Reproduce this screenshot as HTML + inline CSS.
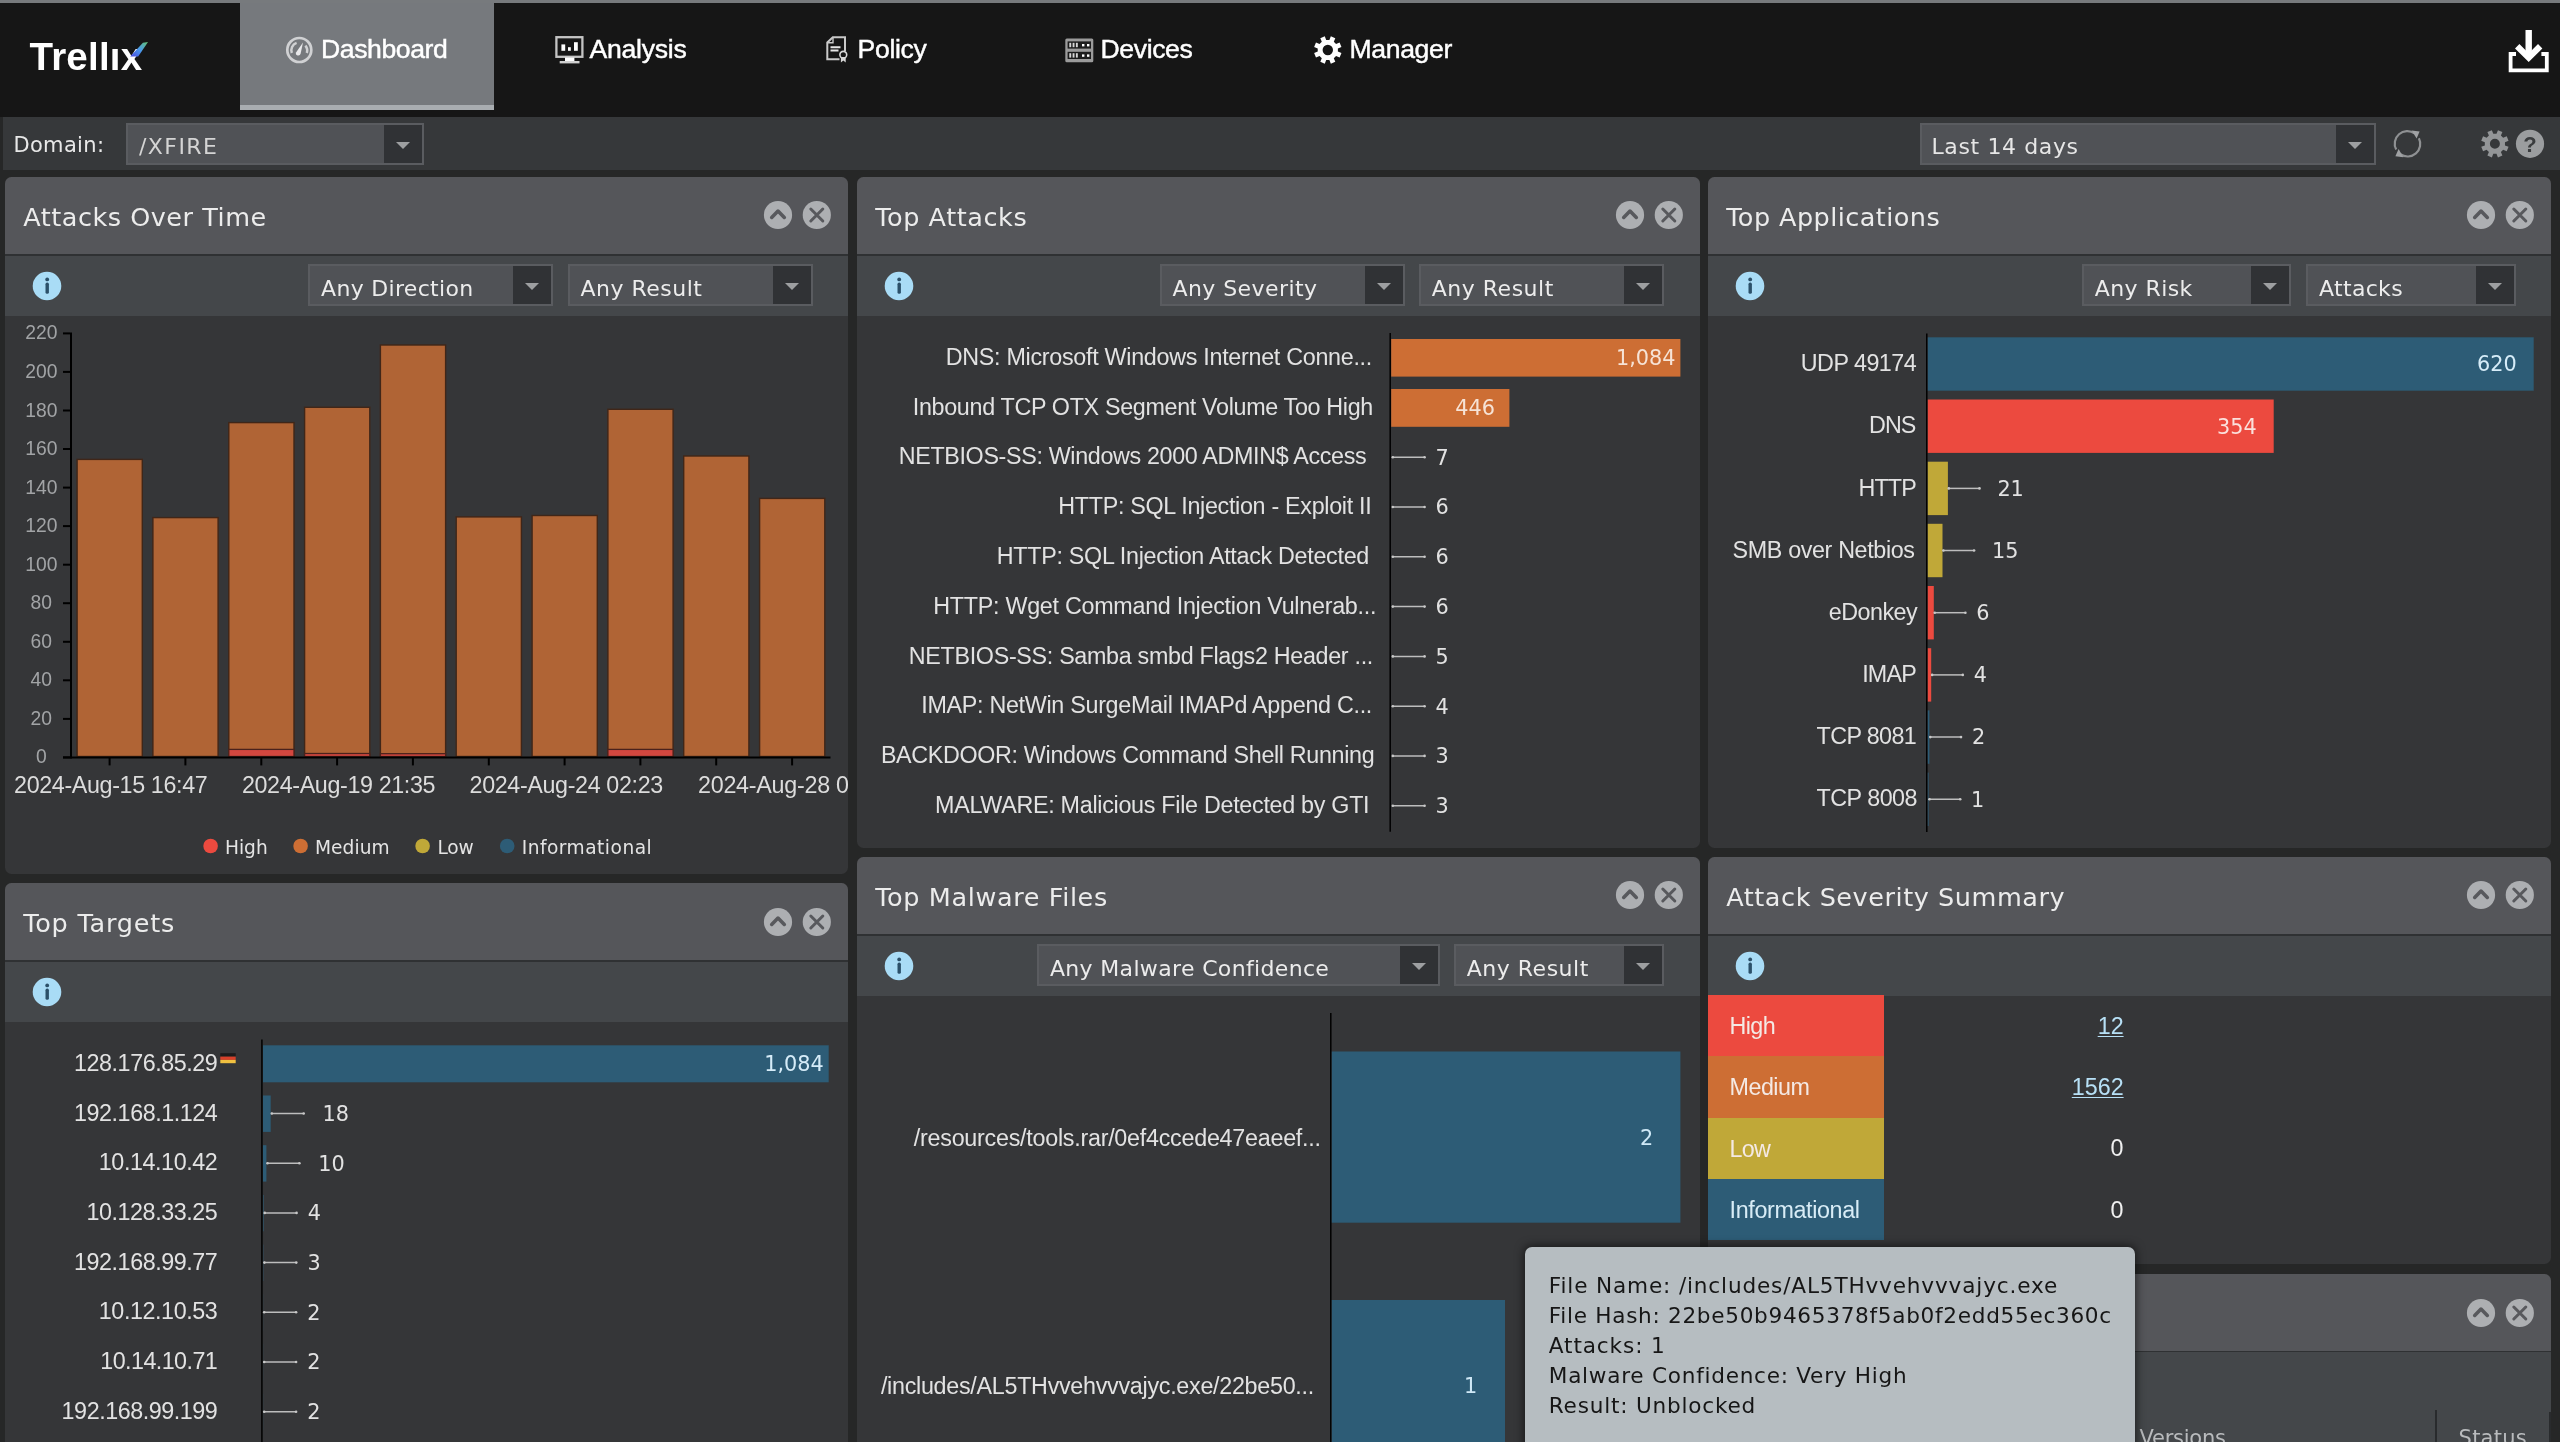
<!DOCTYPE html>
<html lang="en"><head><meta charset="utf-8"><title>Trellix Dashboard</title>
<style>
html,body{margin:0;padding:0;background:#262727;overflow:hidden;}
body{width:2560px;height:1442px;overflow:hidden;position:relative;font-family:"DejaVu Sans",Verdana,sans-serif;color:#e6e6e6;}
div,span,svg{position:absolute;box-sizing:border-box;}
.t{white-space:pre;}
#nav,#toolbar,.panel,#tip{will-change:transform;}
.l{font-family:"Liberation Sans",Arial,Helvetica,sans-serif;}
.d{font-family:"DejaVu Sans",Verdana,sans-serif;}
.b{font-weight:bold;}
#strip{left:0;top:0;width:2560px;height:3px;background:#777a7d;}
#nav{left:0;top:3px;width:2560px;height:114px;background:#161616;}
#tab{left:240px;top:0;width:254px;height:107px;background:#76797d;border-bottom:5px solid #a9adb1;}
.nt{color:#fff;-webkit-text-stroke:0.45px #fff;}
#toolbar{left:3px;top:117px;width:2557px;height:53px;background:#36383a;}
.panel{background:#353638;border-radius:6.5px;overflow:hidden;}
.ph{left:0;top:0;width:100%;height:77px;background:#55565a;}
.pl{left:0;top:76.5px;width:100%;height:2px;background:#2f3133;}
.ps{left:0;top:78px;width:100%;height:60px;background:#44474a;}
.combo{height:42px;background:#505256;border:2px solid #5a5c60;}
.combo i{position:absolute;right:0;top:0;width:38px;height:38px;background:#303235;}
.combo i:after{content:"";position:absolute;left:12px;top:16.5px;border-left:7.5px solid transparent;border-right:7.5px solid transparent;border-top:7px solid #9d9fa1;}
.ct{color:#ececec;}
</style></head>
<body>
<div id="strip"></div>
<div id="nav">
<div id="tab"></div>
<span class="t l b " style="left:29.6px;top:32px;font-size:38.5px;line-height:43px;letter-spacing:0.202px;color:#fff;">Trellix</span>
<svg style="left:125px;top:34px" width="30" height="30" viewBox="125 37 30 30"><defs><linearGradient id="lg" x1="0" y1="1" x2="1" y2="0"><stop offset="0" stop-color="#4a46e0"/><stop offset="0.5" stop-color="#4a9aec"/><stop offset="1" stop-color="#63c36f"/></linearGradient></defs><path d="M130.2 56.6 L142.9 42.8 L148 41.9 L138.2 56.6 Z" fill="url(#lg)"/></svg>
<span class="t l nt" style="left:321.0px;top:31px;font-size:26.6px;line-height:30px;letter-spacing:-0.416px;">Dashboard</span>
<span class="t l nt" style="left:589.5px;top:31px;font-size:26.6px;line-height:30px;letter-spacing:-0.250px;">Analysis</span>
<span class="t l nt" style="left:857.6px;top:31px;font-size:26.6px;line-height:30px;letter-spacing:-0.331px;">Policy</span>
<span class="t l nt" style="left:1100.5px;top:31px;font-size:26.6px;line-height:30px;letter-spacing:-0.385px;">Devices</span>
<span class="t l nt" style="left:1349.5px;top:31px;font-size:26.6px;line-height:30px;letter-spacing:-0.364px;">Manager</span>
<svg style="left:0;top:0" width="2560" height="114" viewBox="0 3 2560 114">
<rect x="110.5" y="40.5" width="9" height="7.2" fill="#161616"/>
<g fill="none" stroke="#d0d1d3" stroke-width="2.7"><circle cx="299.3" cy="50" r="12"/><path d="M291.8 53 A7.8 7.8 0 0 1 296.6 42.9" stroke-width="2.5"/><path d="M305.4 45.6 A7.8 7.8 0 0 1 306.8 53" stroke-width="2.5"/></g><path d="M303 42.4 L300.6 53.8 A2.4 2.4 0 0 1 296 52.4 Z" fill="#e8e8ea"/>
<g><rect x="556.4" y="37.2" width="26" height="19.6" fill="none" stroke="#c4c4c4" stroke-width="2.3"/><rect x="565" y="57.5" width="9.4" height="3.6" fill="#fff"/><rect x="559.7" y="61" width="19.8" height="2.4" fill="#d0d0d0"/><rect x="561.4" y="44.4" width="3.8" height="6.4" fill="#fff"/><rect x="568" y="47.2" width="2.8" height="3.6" fill="#fff"/><rect x="574" y="42.2" width="3.8" height="8.6" fill="#fff"/></g>
<g fill="none" stroke="#c9c9c9" stroke-width="2"><path d="M839.5 59.3 L827.3 59.3 L827.3 42.5 L832.8 37.2 L845 37.2 L845 51"/><path d="M827.5 42.8 L833 42.8 L833 37.4" stroke-width="1.4"/><path d="M830.5 47.2 L840.5 47.2 M830.5 50.6 L838.5 50.6" stroke="#e6e6e6"/></g><circle cx="843.3" cy="54.8" r="3.4" fill="none" stroke="#d8d8d8" stroke-width="1.6"/><path d="M840.9 57 L840.9 62.4 L843.3 60.6 L845.7 62.4 L845.7 57 Z" fill="#d8d8d8"/>
<g><rect x="1065.3" y="38.4" width="28" height="23.8" rx="1.5" fill="#9b9b9b"/><rect x="1067.6" y="41.4" width="23.4" height="7.2" fill="#1c1c1c"/><rect x="1067.6" y="51.8" width="23.4" height="7.2" fill="#1c1c1c"/>
<rect x="1069.3" y="42.8" width="1.9" height="4.4" fill="#d6d6d6"/>
<rect x="1072.6" y="42.8" width="1.9" height="4.4" fill="#d6d6d6"/>
<rect x="1075.9" y="42.8" width="1.9" height="4.4" fill="#d6d6d6"/>
<rect x="1082" y="44" width="2.4" height="2.4" fill="#fff"/>
<rect x="1087" y="44" width="2.4" height="2.4" fill="#fff"/>
<rect x="1069.3" y="53.199999999999996" width="1.9" height="4.4" fill="#d6d6d6"/>
<rect x="1072.6" y="53.199999999999996" width="1.9" height="4.4" fill="#d6d6d6"/>
<rect x="1075.9" y="53.199999999999996" width="1.9" height="4.4" fill="#d6d6d6"/>
<rect x="1082" y="54.4" width="2.4" height="2.4" fill="#fff"/>
<rect x="1087" y="54.4" width="2.4" height="2.4" fill="#fff"/>
</g>
<path d="M1341.46 53.05 L1339.62 57.50 L1336.05 56.00 L1333.80 58.25 L1335.30 61.82 L1330.85 63.66 L1329.40 60.07 L1326.20 60.07 L1324.75 63.66 L1320.30 61.82 L1321.80 58.25 L1319.55 56.00 L1315.98 57.50 L1314.14 53.05 L1317.73 51.60 L1317.73 48.40 L1314.14 46.95 L1315.98 42.50 L1319.55 44.00 L1321.80 41.75 L1320.30 38.18 L1324.75 36.34 L1326.20 39.93 L1329.40 39.93 L1330.85 36.34 L1335.30 38.18 L1333.80 41.75 L1336.05 44.00 L1339.62 42.50 L1341.46 46.95 L1337.87 48.40 L1337.87 51.60 Z M1333.00 50.00 A5.2 5.2 0 1 0 1322.60 50.00 A5.2 5.2 0 1 0 1333.00 50.00 Z" fill="#fff" fill-rule="evenodd"/>
<g fill="none" stroke="#fff"><path d="M2516 54 L2510.6 54 L2510.6 70.3 L2546.8 70.3 L2546.8 54 L2541.4 54" stroke-width="3.8"/><path d="M2528.7 30 L2528.7 56" stroke-width="6.4"/><path d="M2517.2 46.2 L2528.7 57.6 L2540.2 46.2" stroke-width="6.2"/></g>
</svg>
</div>
<div id="toolbar">
<span class="t d " style="left:10.4px;top:16px;font-size:21px;line-height:24px;letter-spacing:0.339px;color:#e8e8e8;">Domain:</span>
<div class="combo" style="left:123px;top:6px;width:298px;height:42px"><span class="t d " style="left:11.0px;top:9px;font-size:22px;line-height:25px;letter-spacing:1.437px;color:#d4d4d4;">/XFIRE</span><i></i></div>
<div class="combo" style="left:1917px;top:6px;width:456px;height:42px"><span class="t d " style="left:9.5px;top:9px;font-size:22px;line-height:25px;letter-spacing:0.615px;color:#e6e6e6;">Last 14 days</span><i></i></div>
<svg style="left:0;top:0" width="2557" height="53" viewBox="3 117 2557 53">
<g fill="none" stroke="#8f9193" stroke-width="2.2"><path d="M2396.2 149.6 A12.6 12.6 0 0 1 2414.6 133.4"/><path d="M2418.9 138.2 A12.6 12.6 0 0 1 2400.4 154.2"/></g><path d="M2411.6 130.6 L2419.6 131.4 L2416.6 138.6 Z" fill="#a0a2a4"/><path d="M2403.4 157.2 L2395.4 156.2 L2398.6 149 Z" fill="#a0a2a4"/>
<path d="M2508.56 146.85 L2506.72 151.30 L2503.15 149.80 L2500.90 152.05 L2502.40 155.62 L2497.95 157.46 L2496.50 153.87 L2493.30 153.87 L2491.85 157.46 L2487.40 155.62 L2488.90 152.05 L2486.65 149.80 L2483.08 151.30 L2481.24 146.85 L2484.83 145.40 L2484.83 142.20 L2481.24 140.75 L2483.08 136.30 L2486.65 137.80 L2488.90 135.55 L2487.40 131.98 L2491.85 130.14 L2493.30 133.73 L2496.50 133.73 L2497.95 130.14 L2502.40 131.98 L2500.90 135.55 L2503.15 137.80 L2506.72 136.30 L2508.56 140.75 L2504.97 142.20 L2504.97 145.40 Z M2499.90 143.80 A5 5 0 1 0 2489.90 143.80 A5 5 0 1 0 2499.90 143.80 Z" fill="#939597" fill-rule="evenodd"/>
<circle cx="2530" cy="143.8" r="14.1" fill="#9b9d9f"/>
<text x="2530.0" y="151.6" font-family="Liberation Sans, Arial, sans-serif" font-size="22" fill="#3a3c3e" text-anchor="middle" font-weight="bold">?</text>
</svg>
</div>
<div class="panel" style="left:5px;top:177px;width:843px;height:697px">
<div class="ph" style="height:77.0px">
<span class="t d " style="left:18.2px;top:25px;font-size:25.5px;line-height:30px;letter-spacing:0.522px;color:#ececec;">Attacks Over Time</span>
</div><div class="pl" style="top:76.5px"></div><div class="ps" style="top:78.5px;height:60.0px"></div>
<svg style="left:757.8px;top:23.2px" width="68.8" height="30" viewBox="762.8 200.2 68.8 30"><circle cx="777.8" cy="215.2" r="14.1" fill="#adafb2"/><path d="M771.5 217.6 L777.8 211.3 L784.1 217.6" fill="none" stroke="#58595d" stroke-width="3.6" stroke-linecap="round" stroke-linejoin="round"/><circle cx="816.6" cy="215.2" r="14.1" fill="#adafb2"/><path d="M810.6 209.2 L822.6 221.2 M822.6 209.2 L810.6 221.2" fill="none" stroke="#58595d" stroke-width="3" stroke-linecap="round"/></svg>
<svg style="left:27.2px;top:93.8px" width="30" height="30" viewBox="-15 -15 30 30"><circle r="14.3" fill="#a9dcf6"/><circle cx="0.2" cy="-6.6" r="1.9" fill="#2b5069"/><rect x="-1.5" y="-3.4" width="3.4" height="11.2" rx="1.6" fill="#2b5069"/></svg>
<div class="combo" style="left:303.3px;top:87.3px;width:244.7px;height:42px"><span class="t d ct" style="left:10.8px;top:10px;font-size:22px;line-height:25px;letter-spacing:0.301px;">Any Direction</span><i></i></div>
<div class="combo" style="left:562.7px;top:87.3px;width:245.2px;height:42px"><span class="t d ct" style="left:10.8px;top:10px;font-size:22px;line-height:25px;letter-spacing:0.502px;">Any Result</span><i></i></div>
<svg style="left:0;top:138px" width="843" height="559" viewBox="5 315 843 559">
<rect x="77.1" y="459.4" width="65.2" height="297.1" fill="#b06435" stroke="#402618" stroke-width="1.4"/>
<rect x="152.9" y="517.6" width="65.2" height="238.9" fill="#b06435" stroke="#402618" stroke-width="1.4"/>
<rect x="228.8" y="422.6" width="65.2" height="333.9" fill="#b06435" stroke="#402618" stroke-width="1.4"/>
<rect x="228.8" y="749.4" width="65.2" height="7.1" fill="#d2473f" stroke="#4a221c" stroke-width="1.3"/>
<rect x="304.6" y="407.3" width="65.2" height="349.2" fill="#b06435" stroke="#402618" stroke-width="1.4"/>
<rect x="304.6" y="753.5" width="65.2" height="3.0" fill="#d2473f" stroke="#4a221c" stroke-width="1.3"/>
<rect x="380.4" y="345.0" width="65.2" height="411.5" fill="#b06435" stroke="#402618" stroke-width="1.4"/>
<rect x="380.4" y="753.7" width="65.2" height="2.8" fill="#d2473f" stroke="#4a221c" stroke-width="1.3"/>
<rect x="456.2" y="516.9" width="65.2" height="239.6" fill="#b06435" stroke="#402618" stroke-width="1.4"/>
<rect x="532.1" y="515.5" width="65.2" height="241.0" fill="#b06435" stroke="#402618" stroke-width="1.4"/>
<rect x="607.9" y="409.3" width="65.2" height="347.2" fill="#b06435" stroke="#402618" stroke-width="1.4"/>
<rect x="607.9" y="749.4" width="65.2" height="7.1" fill="#d2473f" stroke="#4a221c" stroke-width="1.3"/>
<rect x="683.7" y="456.0" width="65.2" height="300.5" fill="#b06435" stroke="#402618" stroke-width="1.4"/>
<rect x="759.6" y="498.4" width="65.2" height="258.1" fill="#b06435" stroke="#402618" stroke-width="1.4"/>
<path d="M71 332.4 L71 758.4" stroke="#000" stroke-width="2" fill="none"/>
<path d="M63 757.4 L830.5 757.4" stroke="#000" stroke-width="2" fill="none"/>
<path d="M63 757.4 L70 757.4" stroke="#000" stroke-width="2"/>
<text x="41.3" y="763.4" font-family="Liberation Sans, Arial, sans-serif" font-size="19.3" fill="#a2a4a6" text-anchor="middle">0</text>
<path d="M63 718.9 L70 718.9" stroke="#000" stroke-width="2"/>
<text x="41.3" y="724.9" font-family="Liberation Sans, Arial, sans-serif" font-size="19.3" fill="#a2a4a6" text-anchor="middle">20</text>
<path d="M63 680.3 L70 680.3" stroke="#000" stroke-width="2"/>
<text x="41.3" y="686.3" font-family="Liberation Sans, Arial, sans-serif" font-size="19.3" fill="#a2a4a6" text-anchor="middle">40</text>
<path d="M63 641.8 L70 641.8" stroke="#000" stroke-width="2"/>
<text x="41.3" y="647.8" font-family="Liberation Sans, Arial, sans-serif" font-size="19.3" fill="#a2a4a6" text-anchor="middle">60</text>
<path d="M63 603.2 L70 603.2" stroke="#000" stroke-width="2"/>
<text x="41.3" y="609.2" font-family="Liberation Sans, Arial, sans-serif" font-size="19.3" fill="#a2a4a6" text-anchor="middle">80</text>
<path d="M63 564.7 L70 564.7" stroke="#000" stroke-width="2"/>
<text x="41.3" y="570.7" font-family="Liberation Sans, Arial, sans-serif" font-size="19.3" fill="#a2a4a6" text-anchor="middle">100</text>
<path d="M63 526.1 L70 526.1" stroke="#000" stroke-width="2"/>
<text x="41.3" y="532.1" font-family="Liberation Sans, Arial, sans-serif" font-size="19.3" fill="#a2a4a6" text-anchor="middle">120</text>
<path d="M63 487.6 L70 487.6" stroke="#000" stroke-width="2"/>
<text x="41.3" y="493.6" font-family="Liberation Sans, Arial, sans-serif" font-size="19.3" fill="#a2a4a6" text-anchor="middle">140</text>
<path d="M63 449.0 L70 449.0" stroke="#000" stroke-width="2"/>
<text x="41.3" y="455.0" font-family="Liberation Sans, Arial, sans-serif" font-size="19.3" fill="#a2a4a6" text-anchor="middle">160</text>
<path d="M63 410.5 L70 410.5" stroke="#000" stroke-width="2"/>
<text x="41.3" y="416.5" font-family="Liberation Sans, Arial, sans-serif" font-size="19.3" fill="#a2a4a6" text-anchor="middle">180</text>
<path d="M63 371.9 L70 371.9" stroke="#000" stroke-width="2"/>
<text x="41.3" y="377.9" font-family="Liberation Sans, Arial, sans-serif" font-size="19.3" fill="#a2a4a6" text-anchor="middle">200</text>
<path d="M63 333.4 L70 333.4" stroke="#000" stroke-width="2"/>
<text x="41.3" y="339.4" font-family="Liberation Sans, Arial, sans-serif" font-size="19.3" fill="#a2a4a6" text-anchor="middle">220</text>
<path d="M109.6 758 L109.6 765.4" stroke="#000" stroke-width="2"/>
<path d="M185.4 758 L185.4 765.4" stroke="#000" stroke-width="2"/>
<path d="M261.3 758 L261.3 765.4" stroke="#000" stroke-width="2"/>
<path d="M337.1 758 L337.1 765.4" stroke="#000" stroke-width="2"/>
<path d="M412.9 758 L412.9 765.4" stroke="#000" stroke-width="2"/>
<path d="M488.8 758 L488.8 765.4" stroke="#000" stroke-width="2"/>
<path d="M564.6 758 L564.6 765.4" stroke="#000" stroke-width="2"/>
<path d="M640.4 758 L640.4 765.4" stroke="#000" stroke-width="2"/>
<path d="M716.2 758 L716.2 765.4" stroke="#000" stroke-width="2"/>
<path d="M792.1 758 L792.1 765.4" stroke="#000" stroke-width="2"/>
<text x="14.1" y="793.4" font-family="Liberation Sans, Arial, sans-serif" font-size="23.3" fill="#dcdcdc" text-anchor="start" textLength="193.6" lengthAdjust="spacing">2024-Aug-15 16:47</text>
<text x="241.9" y="793.4" font-family="Liberation Sans, Arial, sans-serif" font-size="23.3" fill="#dcdcdc" text-anchor="start" textLength="193.6" lengthAdjust="spacing">2024-Aug-19 21:35</text>
<text x="469.6" y="793.4" font-family="Liberation Sans, Arial, sans-serif" font-size="23.3" fill="#dcdcdc" text-anchor="start" textLength="193.6" lengthAdjust="spacing">2024-Aug-24 02:23</text>
<text x="698.0" y="793.4" font-family="Liberation Sans, Arial, sans-serif" font-size="23.3" fill="#dcdcdc" text-anchor="start" textLength="193.6" lengthAdjust="spacing">2024-Aug-28 06:11</text>
<circle cx="210.6" cy="846" r="7.3" fill="#ec4a3f"/>
<text x="225.0" y="853.6" font-family="DejaVu Sans, Verdana, sans-serif" font-size="18.6" fill="#e4e4e4" text-anchor="start" textLength="42.7" lengthAdjust="spacing">High</text>
<circle cx="300.6" cy="846" r="7.3" fill="#cd6e34"/>
<text x="315.0" y="853.6" font-family="DejaVu Sans, Verdana, sans-serif" font-size="18.6" fill="#e4e4e4" text-anchor="start" textLength="74.7" lengthAdjust="spacing">Medium</text>
<circle cx="422.6" cy="846" r="7.3" fill="#c0a838"/>
<text x="437.4" y="853.6" font-family="DejaVu Sans, Verdana, sans-serif" font-size="18.6" fill="#e4e4e4" text-anchor="start" textLength="36.2" lengthAdjust="spacing">Low</text>
<circle cx="507.2" cy="846" r="7.3" fill="#2d5c76"/>
<text x="521.7" y="853.6" font-family="DejaVu Sans, Verdana, sans-serif" font-size="18.6" fill="#e4e4e4" text-anchor="start" textLength="130.0" lengthAdjust="spacing">Informational</text>
</svg></div>
<div class="panel" style="left:5px;top:883px;width:843px;height:600px">
<div class="ph" style="height:77.5px">
<span class="t d " style="left:18.2px;top:25px;font-size:25.5px;line-height:30px;letter-spacing:0.769px;color:#ececec;">Top Targets</span>
</div><div class="pl" style="top:77px"></div><div class="ps" style="top:79px;height:59.5px"></div>
<svg style="left:757.8px;top:23.7px" width="68.8" height="30" viewBox="762.8 906.7 68.8 30"><circle cx="777.8" cy="921.7" r="14.1" fill="#adafb2"/><path d="M771.5 924.1 L777.8 917.8 L784.1 924.1" fill="none" stroke="#58595d" stroke-width="3.6" stroke-linecap="round" stroke-linejoin="round"/><circle cx="816.6" cy="921.7" r="14.1" fill="#adafb2"/><path d="M810.6 915.7 L822.6 927.7 M822.6 915.7 L810.6 927.7" fill="none" stroke="#58595d" stroke-width="3" stroke-linecap="round"/></svg>
<svg style="left:27.2px;top:93.8px" width="30" height="30" viewBox="-15 -15 30 30"><circle r="14.3" fill="#a9dcf6"/><circle cx="0.2" cy="-6.6" r="1.9" fill="#2b5069"/><rect x="-1.5" y="-3.4" width="3.4" height="11.2" rx="1.6" fill="#2b5069"/></svg>
<svg style="left:0;top:138px" width="843" height="462" viewBox="5 1021 843 462">
<path d="M261.9 1039.6 L261.9 1442" stroke="#000" stroke-width="1.5"/>
<text x="74.0" y="1070.9" font-family="Liberation Sans, Arial, sans-serif" font-size="23.3" fill="#e2e2e2" text-anchor="start" textLength="143.8" lengthAdjust="spacing">128.176.85.29</text>
<rect x="263" y="1045.3" width="565.7" height="37" fill="#2d5c76"/>
<text x="823.8" y="1071.1" font-family="DejaVu Sans, Verdana, sans-serif" font-size="20.8" fill="#d6ecf8" text-anchor="end">1,084</text>
<text x="74.0" y="1120.6" font-family="Liberation Sans, Arial, sans-serif" font-size="23.3" fill="#e2e2e2" text-anchor="start" textLength="143.8" lengthAdjust="spacing">192.168.1.124</text>
<rect x="263" y="1095.5" width="7.7" height="36.4" fill="#2d5c76"/>
<path d="M271.2 1113.5 L303.7 1113.5" stroke="#bdbdbd" stroke-width="1.5" fill="none"/><circle cx="271.8" cy="1113.5" r="1.3" fill="#c8c8c8"/><circle cx="303.7" cy="1113.5" r="1.3" fill="#c8c8c8"/>
<text x="322.5" y="1120.8" font-family="DejaVu Sans, Verdana, sans-serif" font-size="20.8" fill="#e2e2e2" text-anchor="start">18</text>
<text x="98.8" y="1170.3" font-family="Liberation Sans, Arial, sans-serif" font-size="23.3" fill="#e2e2e2" text-anchor="start" textLength="119.0" lengthAdjust="spacing">10.14.10.42</text>
<rect x="263" y="1145.2" width="3.4" height="36.4" fill="#2d5c76"/>
<path d="M266.9 1163.2 L299.4 1163.2" stroke="#bdbdbd" stroke-width="1.5" fill="none"/><circle cx="267.5" cy="1163.2" r="1.3" fill="#c8c8c8"/><circle cx="299.4" cy="1163.2" r="1.3" fill="#c8c8c8"/>
<text x="318.2" y="1170.5" font-family="DejaVu Sans, Verdana, sans-serif" font-size="20.8" fill="#e2e2e2" text-anchor="start">10</text>
<text x="86.4" y="1220.0" font-family="Liberation Sans, Arial, sans-serif" font-size="23.3" fill="#e2e2e2" text-anchor="start" textLength="131.4" lengthAdjust="spacing">10.128.33.25</text>
<rect x="263" y="1194.9" width="0.6" height="36.4" fill="#2d5c76"/>
<path d="M264.1 1212.9 L296.6 1212.9" stroke="#bdbdbd" stroke-width="1.5" fill="none"/><circle cx="264.7" cy="1212.9" r="1.3" fill="#c8c8c8"/><circle cx="296.6" cy="1212.9" r="1.3" fill="#c8c8c8"/>
<text x="307.8" y="1220.2" font-family="DejaVu Sans, Verdana, sans-serif" font-size="20.8" fill="#e2e2e2" text-anchor="start">4</text>
<text x="74.0" y="1269.7" font-family="Liberation Sans, Arial, sans-serif" font-size="23.3" fill="#e2e2e2" text-anchor="start" textLength="143.8" lengthAdjust="spacing">192.168.99.77</text>
<rect x="263" y="1244.6" width="0.3" height="36.4" fill="#2d5c76"/>
<path d="M263.8 1262.6 L296.3 1262.6" stroke="#bdbdbd" stroke-width="1.5" fill="none"/><circle cx="264.4" cy="1262.6" r="1.3" fill="#c8c8c8"/><circle cx="296.3" cy="1262.6" r="1.3" fill="#c8c8c8"/>
<text x="307.5" y="1269.9" font-family="DejaVu Sans, Verdana, sans-serif" font-size="20.8" fill="#e2e2e2" text-anchor="start">3</text>
<text x="98.8" y="1319.4" font-family="Liberation Sans, Arial, sans-serif" font-size="23.3" fill="#e2e2e2" text-anchor="start" textLength="119.0" lengthAdjust="spacing">10.12.10.53</text>
<rect x="263" y="1294.3" width="0.1" height="36.4" fill="#2d5c76"/>
<path d="M263.6 1312.3 L296.1 1312.3" stroke="#bdbdbd" stroke-width="1.5" fill="none"/><circle cx="264.2" cy="1312.3" r="1.3" fill="#c8c8c8"/><circle cx="296.1" cy="1312.3" r="1.3" fill="#c8c8c8"/>
<text x="307.3" y="1319.6" font-family="DejaVu Sans, Verdana, sans-serif" font-size="20.8" fill="#e2e2e2" text-anchor="start">2</text>
<text x="100.3" y="1369.1" font-family="Liberation Sans, Arial, sans-serif" font-size="23.3" fill="#e2e2e2" text-anchor="start" textLength="117.5" lengthAdjust="spacing">10.14.10.71</text>
<rect x="263" y="1344.0" width="0.1" height="36.4" fill="#2d5c76"/>
<path d="M263.6 1362.0 L296.1 1362.0" stroke="#bdbdbd" stroke-width="1.5" fill="none"/><circle cx="264.2" cy="1362.0" r="1.3" fill="#c8c8c8"/><circle cx="296.1" cy="1362.0" r="1.3" fill="#c8c8c8"/>
<text x="307.3" y="1369.3" font-family="DejaVu Sans, Verdana, sans-serif" font-size="20.8" fill="#e2e2e2" text-anchor="start">2</text>
<text x="61.6" y="1418.8" font-family="Liberation Sans, Arial, sans-serif" font-size="23.3" fill="#e2e2e2" text-anchor="start" textLength="156.2" lengthAdjust="spacing">192.168.99.199</text>
<rect x="263" y="1393.7" width="0.1" height="36.4" fill="#2d5c76"/>
<path d="M263.6 1411.7 L296.1 1411.7" stroke="#bdbdbd" stroke-width="1.5" fill="none"/><circle cx="264.2" cy="1411.7" r="1.3" fill="#c8c8c8"/><circle cx="296.1" cy="1411.7" r="1.3" fill="#c8c8c8"/>
<text x="307.3" y="1419.0" font-family="DejaVu Sans, Verdana, sans-serif" font-size="20.8" fill="#e2e2e2" text-anchor="start">2</text>
<g><rect x="220.3" y="1053.2" width="15.4" height="3.4" fill="#1c1c1c"/><rect x="220.3" y="1056.6" width="15.4" height="3.3" fill="#d8402a"/><rect x="220.3" y="1059.9" width="15.4" height="3.3" fill="#f0c040"/></g>
</svg></div>
<div class="panel" style="left:857px;top:177px;width:843px;height:671px">
<div class="ph" style="height:77.0px">
<span class="t d " style="left:18.2px;top:25px;font-size:25.5px;line-height:30px;letter-spacing:0.567px;color:#ececec;">Top Attacks</span>
</div><div class="pl" style="top:76.5px"></div><div class="ps" style="top:78.5px;height:60.0px"></div>
<svg style="left:757.8px;top:23.2px" width="68.8" height="30" viewBox="1614.8 200.2 68.8 30"><circle cx="1629.8" cy="215.2" r="14.1" fill="#adafb2"/><path d="M1623.5 217.6 L1629.8 211.3 L1636.1 217.6" fill="none" stroke="#58595d" stroke-width="3.6" stroke-linecap="round" stroke-linejoin="round"/><circle cx="1668.6" cy="215.2" r="14.1" fill="#adafb2"/><path d="M1662.6 209.2 L1674.6 221.2 M1674.6 209.2 L1662.6 221.2" fill="none" stroke="#58595d" stroke-width="3" stroke-linecap="round"/></svg>
<svg style="left:27.2px;top:93.8px" width="30" height="30" viewBox="-15 -15 30 30"><circle r="14.3" fill="#a9dcf6"/><circle cx="0.2" cy="-6.6" r="1.9" fill="#2b5069"/><rect x="-1.5" y="-3.4" width="3.4" height="11.2" rx="1.6" fill="#2b5069"/></svg>
<div class="combo" style="left:302.7px;top:87.3px;width:245.2px;height:42px"><span class="t d ct" style="left:10.8px;top:10px;font-size:22px;line-height:25px;letter-spacing:0.421px;">Any Severity</span><i></i></div>
<div class="combo" style="left:562.0px;top:87.3px;width:245.2px;height:42px"><span class="t d ct" style="left:10.8px;top:10px;font-size:22px;line-height:25px;letter-spacing:0.502px;">Any Result</span><i></i></div>
<svg style="left:0;top:138px" width="843" height="533" viewBox="857 315 843 533">
<path d="M1390.2 333 L1390.2 831.8" stroke="#000" stroke-width="1.5"/>
<text x="945.7" y="364.8" font-family="Liberation Sans, Arial, sans-serif" font-size="23.3" fill="#e2e2e2" text-anchor="start" textLength="426.6" lengthAdjust="spacing">DNS: Microsoft Windows Internet Conne...</text>
<rect x="1391.2" y="339" width="289.2" height="37.6" fill="#cd6e34"/>
<text x="1675.5" y="365.0" font-family="DejaVu Sans, Verdana, sans-serif" font-size="20.8" fill="#f6e3d6" text-anchor="end">1,084</text>
<text x="912.8" y="414.6" font-family="Liberation Sans, Arial, sans-serif" font-size="23.3" fill="#e2e2e2" text-anchor="start" textLength="460.5" lengthAdjust="spacing">Inbound TCP OTX Segment Volume Too High</text>
<rect x="1391.2" y="389" width="118.2" height="37.8" fill="#cd6e34"/>
<text x="1495.0" y="414.8" font-family="DejaVu Sans, Verdana, sans-serif" font-size="20.8" fill="#f6e3d6" text-anchor="end">446</text>
<text x="898.7" y="464.4" font-family="Liberation Sans, Arial, sans-serif" font-size="23.3" fill="#e2e2e2" text-anchor="start" textLength="467.9" lengthAdjust="spacing">NETBIOS-SS: Windows 2000 ADMIN$ Access</text>
<path d="M1392.2 457.3 L1424.6 457.3" stroke="#bdbdbd" stroke-width="1.5" fill="none"/><circle cx="1392.8" cy="457.3" r="1.3" fill="#c8c8c8"/><circle cx="1424.6" cy="457.3" r="1.3" fill="#c8c8c8"/>
<text x="1435.6" y="464.6" font-family="DejaVu Sans, Verdana, sans-serif" font-size="20.8" fill="#e2e2e2" text-anchor="start">7</text>
<text x="1058.3" y="514.1" font-family="Liberation Sans, Arial, sans-serif" font-size="23.3" fill="#e2e2e2" text-anchor="start" textLength="313.4" lengthAdjust="spacing">HTTP: SQL Injection - Exploit II</text>
<path d="M1392.2 507.0 L1424.6 507.0" stroke="#bdbdbd" stroke-width="1.5" fill="none"/><circle cx="1392.8" cy="507.0" r="1.3" fill="#c8c8c8"/><circle cx="1424.6" cy="507.0" r="1.3" fill="#c8c8c8"/>
<text x="1435.6" y="514.3" font-family="DejaVu Sans, Verdana, sans-serif" font-size="20.8" fill="#e2e2e2" text-anchor="start">6</text>
<text x="996.8" y="563.9" font-family="Liberation Sans, Arial, sans-serif" font-size="23.3" fill="#e2e2e2" text-anchor="start" textLength="372.5" lengthAdjust="spacing">HTTP: SQL Injection Attack Detected</text>
<path d="M1392.2 556.8 L1424.6 556.8" stroke="#bdbdbd" stroke-width="1.5" fill="none"/><circle cx="1392.8" cy="556.8" r="1.3" fill="#c8c8c8"/><circle cx="1424.6" cy="556.8" r="1.3" fill="#c8c8c8"/>
<text x="1435.6" y="564.1" font-family="DejaVu Sans, Verdana, sans-serif" font-size="20.8" fill="#e2e2e2" text-anchor="start">6</text>
<text x="933.3" y="613.7" font-family="Liberation Sans, Arial, sans-serif" font-size="23.3" fill="#e2e2e2" text-anchor="start" textLength="443.1" lengthAdjust="spacing">HTTP: Wget Command Injection Vulnerab...</text>
<path d="M1392.2 606.6 L1424.6 606.6" stroke="#bdbdbd" stroke-width="1.5" fill="none"/><circle cx="1392.8" cy="606.6" r="1.3" fill="#c8c8c8"/><circle cx="1424.6" cy="606.6" r="1.3" fill="#c8c8c8"/>
<text x="1435.6" y="613.9" font-family="DejaVu Sans, Verdana, sans-serif" font-size="20.8" fill="#e2e2e2" text-anchor="start">6</text>
<text x="908.8" y="663.5" font-family="Liberation Sans, Arial, sans-serif" font-size="23.3" fill="#e2e2e2" text-anchor="start" textLength="464.5" lengthAdjust="spacing">NETBIOS-SS: Samba smbd Flags2 Header ...</text>
<path d="M1392.2 656.4 L1424.6 656.4" stroke="#bdbdbd" stroke-width="1.5" fill="none"/><circle cx="1392.8" cy="656.4" r="1.3" fill="#c8c8c8"/><circle cx="1424.6" cy="656.4" r="1.3" fill="#c8c8c8"/>
<text x="1435.6" y="663.7" font-family="DejaVu Sans, Verdana, sans-serif" font-size="20.8" fill="#e2e2e2" text-anchor="start">5</text>
<text x="921.2" y="713.3" font-family="Liberation Sans, Arial, sans-serif" font-size="23.3" fill="#e2e2e2" text-anchor="start" textLength="451.1" lengthAdjust="spacing">IMAP: NetWin SurgeMail IMAPd Append C...</text>
<path d="M1392.2 706.2 L1424.6 706.2" stroke="#bdbdbd" stroke-width="1.5" fill="none"/><circle cx="1392.8" cy="706.2" r="1.3" fill="#c8c8c8"/><circle cx="1424.6" cy="706.2" r="1.3" fill="#c8c8c8"/>
<text x="1435.6" y="713.5" font-family="DejaVu Sans, Verdana, sans-serif" font-size="20.8" fill="#e2e2e2" text-anchor="start">4</text>
<text x="880.9" y="763.0" font-family="Liberation Sans, Arial, sans-serif" font-size="23.3" fill="#e2e2e2" text-anchor="start" textLength="493.8" lengthAdjust="spacing">BACKDOOR: Windows Command Shell Running</text>
<path d="M1392.2 755.9 L1424.6 755.9" stroke="#bdbdbd" stroke-width="1.5" fill="none"/><circle cx="1392.8" cy="755.9" r="1.3" fill="#c8c8c8"/><circle cx="1424.6" cy="755.9" r="1.3" fill="#c8c8c8"/>
<text x="1435.6" y="763.2" font-family="DejaVu Sans, Verdana, sans-serif" font-size="20.8" fill="#e2e2e2" text-anchor="start">3</text>
<text x="935.0" y="812.8" font-family="Liberation Sans, Arial, sans-serif" font-size="23.3" fill="#e2e2e2" text-anchor="start" textLength="434.6" lengthAdjust="spacing">MALWARE: Malicious File Detected by GTI</text>
<path d="M1392.2 805.7 L1424.6 805.7" stroke="#bdbdbd" stroke-width="1.5" fill="none"/><circle cx="1392.8" cy="805.7" r="1.3" fill="#c8c8c8"/><circle cx="1424.6" cy="805.7" r="1.3" fill="#c8c8c8"/>
<text x="1435.6" y="813.0" font-family="DejaVu Sans, Verdana, sans-serif" font-size="20.8" fill="#e2e2e2" text-anchor="start">3</text>
</svg></div>
<div class="panel" style="left:857px;top:857px;width:843px;height:620px">
<div class="ph" style="height:77.0px">
<span class="t d " style="left:18.2px;top:25px;font-size:25.5px;line-height:30px;letter-spacing:0.625px;color:#ececec;">Top Malware Files</span>
</div><div class="pl" style="top:76.5px"></div><div class="ps" style="top:78.5px;height:60.0px"></div>
<svg style="left:757.8px;top:23.2px" width="68.8" height="30" viewBox="1614.8 880.2 68.8 30"><circle cx="1629.8" cy="895.2" r="14.1" fill="#adafb2"/><path d="M1623.5 897.6 L1629.8 891.3 L1636.1 897.6" fill="none" stroke="#58595d" stroke-width="3.6" stroke-linecap="round" stroke-linejoin="round"/><circle cx="1668.6" cy="895.2" r="14.1" fill="#adafb2"/><path d="M1662.6 889.2 L1674.6 901.2 M1674.6 889.2 L1662.6 901.2" fill="none" stroke="#58595d" stroke-width="3" stroke-linecap="round"/></svg>
<svg style="left:27.2px;top:93.8px" width="30" height="30" viewBox="-15 -15 30 30"><circle r="14.3" fill="#a9dcf6"/><circle cx="0.2" cy="-6.6" r="1.9" fill="#2b5069"/><rect x="-1.5" y="-3.4" width="3.4" height="11.2" rx="1.6" fill="#2b5069"/></svg>
<div class="combo" style="left:180.1px;top:87.3px;width:403.1px;height:42px"><span class="t d ct" style="left:10.8px;top:10px;font-size:22px;line-height:25px;letter-spacing:0.341px;">Any Malware Confidence</span><i></i></div>
<div class="combo" style="left:597.0px;top:87.3px;width:210.2px;height:42px"><span class="t d ct" style="left:10.8px;top:10px;font-size:22px;line-height:25px;letter-spacing:0.502px;">Any Result</span><i></i></div>
<svg style="left:0;top:138px" width="843" height="482" viewBox="857 995 843 482">
<path d="M1330.8 1013 L1330.8 1442" stroke="#000" stroke-width="1.5"/>
<rect x="1331.8" y="1051.5" width="348.6" height="171.2" fill="#2d5c76"/>
<rect x="1331.8" y="1300" width="173.2" height="150" fill="#2d5c76"/>
<text x="913.8" y="1145.6" font-family="Liberation Sans, Arial, sans-serif" font-size="23.3" fill="#e2e2e2" text-anchor="start" textLength="407.2" lengthAdjust="spacing">/resources/tools.rar/0ef4ccede47eaeef...</text>
<text x="880.9" y="1394.0" font-family="Liberation Sans, Arial, sans-serif" font-size="23.3" fill="#e2e2e2" text-anchor="start" textLength="433.3" lengthAdjust="spacing">/includes/AL5THvvehvvvajyc.exe/22be50...</text>
<text x="1653.2" y="1144.8" font-family="DejaVu Sans, Verdana, sans-serif" font-size="20.8" fill="#cfe8f6" text-anchor="end">2</text>
<text x="1477.2" y="1393.4" font-family="DejaVu Sans, Verdana, sans-serif" font-size="20.8" fill="#cfe8f6" text-anchor="end">1</text>
</svg></div>
<div class="panel" style="left:1708px;top:177px;width:843px;height:671px">
<div class="ph" style="height:77.0px">
<span class="t d " style="left:18.2px;top:25px;font-size:25.5px;line-height:30px;letter-spacing:0.440px;color:#ececec;">Top Applications</span>
</div><div class="pl" style="top:76.5px"></div><div class="ps" style="top:78.5px;height:60.0px"></div>
<svg style="left:757.8px;top:23.2px" width="68.8" height="30" viewBox="2465.8 200.2 68.8 30"><circle cx="2480.8" cy="215.2" r="14.1" fill="#adafb2"/><path d="M2474.5 217.6 L2480.8 211.3 L2487.1 217.6" fill="none" stroke="#58595d" stroke-width="3.6" stroke-linecap="round" stroke-linejoin="round"/><circle cx="2519.6" cy="215.2" r="14.1" fill="#adafb2"/><path d="M2513.6 209.2 L2525.6 221.2 M2525.6 209.2 L2513.6 221.2" fill="none" stroke="#58595d" stroke-width="3" stroke-linecap="round"/></svg>
<svg style="left:27.2px;top:93.8px" width="30" height="30" viewBox="-15 -15 30 30"><circle r="14.3" fill="#a9dcf6"/><circle cx="0.2" cy="-6.6" r="1.9" fill="#2b5069"/><rect x="-1.5" y="-3.4" width="3.4" height="11.2" rx="1.6" fill="#2b5069"/></svg>
<div class="combo" style="left:374.0px;top:87.3px;width:209.2px;height:42px"><span class="t d ct" style="left:10.8px;top:10px;font-size:22px;line-height:25px;letter-spacing:0.413px;">Any Risk</span><i></i></div>
<div class="combo" style="left:598.3px;top:87.3px;width:209.3px;height:42px"><span class="t d ct" style="left:10.8px;top:10px;font-size:22px;line-height:25px;letter-spacing:0.301px;">Attacks</span><i></i></div>
<svg style="left:0;top:138px" width="843" height="533" viewBox="1708 315 843 533">
<path d="M1926.8 333.5 L1926.8 831.9" stroke="#000" stroke-width="1.5"/>
<text x="1800.8" y="371.1" font-family="Liberation Sans, Arial, sans-serif" font-size="23.3" fill="#e2e2e2" text-anchor="start" textLength="115.9" lengthAdjust="spacing">UDP 49174</text>
<rect x="1927.8" y="337.3" width="605.9" height="53.4" fill="#2d5c76"/>
<text x="2516.8" y="371.3" font-family="DejaVu Sans, Verdana, sans-serif" font-size="20.8" fill="#d6ecf8" text-anchor="end">620</text>
<text x="1869.0" y="433.3" font-family="Liberation Sans, Arial, sans-serif" font-size="23.3" fill="#e2e2e2" text-anchor="start" textLength="47.3" lengthAdjust="spacing">DNS</text>
<rect x="1927.8" y="399.5" width="345.9" height="53.4" fill="#ec4a3f"/>
<text x="2256.8" y="433.5" font-family="DejaVu Sans, Verdana, sans-serif" font-size="20.8" fill="#fbe0dc" text-anchor="end">354</text>
<text x="1858.5" y="495.5" font-family="Liberation Sans, Arial, sans-serif" font-size="23.3" fill="#e2e2e2" text-anchor="start" textLength="58.2" lengthAdjust="spacing">HTTP</text>
<rect x="1927.8" y="461.7" width="20.1" height="53.4" fill="#c0a838"/>
<path d="M1948.2 488.4 L1979.5 488.4" stroke="#bdbdbd" stroke-width="1.5" fill="none"/><circle cx="1948.8" cy="488.4" r="1.3" fill="#c8c8c8"/><circle cx="1979.5" cy="488.4" r="1.3" fill="#c8c8c8"/>
<text x="1997.4" y="495.7" font-family="DejaVu Sans, Verdana, sans-serif" font-size="20.8" fill="#e2e2e2" text-anchor="start">21</text>
<text x="1732.6" y="557.6" font-family="Liberation Sans, Arial, sans-serif" font-size="23.3" fill="#e2e2e2" text-anchor="start" textLength="182.4" lengthAdjust="spacing">SMB over Netbios</text>
<rect x="1927.8" y="523.8" width="14.7" height="53.4" fill="#c0a838"/>
<path d="M1942.8 550.5 L1974.1 550.5" stroke="#bdbdbd" stroke-width="1.5" fill="none"/><circle cx="1943.4" cy="550.5" r="1.3" fill="#c8c8c8"/><circle cx="1974.1" cy="550.5" r="1.3" fill="#c8c8c8"/>
<text x="1992.0" y="557.8" font-family="DejaVu Sans, Verdana, sans-serif" font-size="20.8" fill="#e2e2e2" text-anchor="start">15</text>
<text x="1828.7" y="619.8" font-family="Liberation Sans, Arial, sans-serif" font-size="23.3" fill="#e2e2e2" text-anchor="start" textLength="89.0" lengthAdjust="spacing">eDonkey</text>
<rect x="1927.8" y="586.0" width="6.0" height="53.4" fill="#ec4a3f"/>
<path d="M1934.1 612.7 L1965.4 612.7" stroke="#bdbdbd" stroke-width="1.5" fill="none"/><circle cx="1934.7" cy="612.7" r="1.3" fill="#c8c8c8"/><circle cx="1965.4" cy="612.7" r="1.3" fill="#c8c8c8"/>
<text x="1976.3" y="620.0" font-family="DejaVu Sans, Verdana, sans-serif" font-size="20.8" fill="#e2e2e2" text-anchor="start">6</text>
<text x="1862.2" y="682.0" font-family="Liberation Sans, Arial, sans-serif" font-size="23.3" fill="#e2e2e2" text-anchor="start" textLength="54.5" lengthAdjust="spacing">IMAP</text>
<rect x="1927.8" y="648.2" width="3.4" height="53.4" fill="#ec4a3f"/>
<path d="M1931.5 674.9 L1962.8 674.9" stroke="#bdbdbd" stroke-width="1.5" fill="none"/><circle cx="1932.1" cy="674.9" r="1.3" fill="#c8c8c8"/><circle cx="1962.8" cy="674.9" r="1.3" fill="#c8c8c8"/>
<text x="1973.7" y="682.2" font-family="DejaVu Sans, Verdana, sans-serif" font-size="20.8" fill="#e2e2e2" text-anchor="start">4</text>
<text x="1816.6" y="744.2" font-family="Liberation Sans, Arial, sans-serif" font-size="23.3" fill="#e2e2e2" text-anchor="start" textLength="100.1" lengthAdjust="spacing">TCP 8081</text>
<rect x="1927.8" y="710.4" width="1.6" height="53.4" fill="#2d5c76"/>
<path d="M1929.7 737.1 L1961.0 737.1" stroke="#bdbdbd" stroke-width="1.5" fill="none"/><circle cx="1930.3" cy="737.1" r="1.3" fill="#c8c8c8"/><circle cx="1961.0" cy="737.1" r="1.3" fill="#c8c8c8"/>
<text x="1971.9" y="744.4" font-family="DejaVu Sans, Verdana, sans-serif" font-size="20.8" fill="#e2e2e2" text-anchor="start">2</text>
<text x="1816.6" y="806.4" font-family="Liberation Sans, Arial, sans-serif" font-size="23.3" fill="#e2e2e2" text-anchor="start" textLength="100.9" lengthAdjust="spacing">TCP 8008</text>
<rect x="1927.8" y="772.6" width="0.8" height="53.4" fill="#2d5c76"/>
<path d="M1928.9 799.3 L1960.2 799.3" stroke="#bdbdbd" stroke-width="1.5" fill="none"/><circle cx="1929.5" cy="799.3" r="1.3" fill="#c8c8c8"/><circle cx="1960.2" cy="799.3" r="1.3" fill="#c8c8c8"/>
<text x="1971.1" y="806.6" font-family="DejaVu Sans, Verdana, sans-serif" font-size="20.8" fill="#e2e2e2" text-anchor="start">1</text>
</svg></div>
<div class="panel" style="left:1708px;top:857px;width:843px;height:407px">
<div class="ph" style="height:77.0px">
<span class="t d " style="left:18.2px;top:25px;font-size:25.5px;line-height:30px;letter-spacing:0.561px;color:#ececec;">Attack Severity Summary</span>
</div><div class="pl" style="top:76.5px"></div><div class="ps" style="top:78.5px;height:60.0px"></div>
<svg style="left:757.8px;top:23.2px" width="68.8" height="30" viewBox="2465.8 880.2 68.8 30"><circle cx="2480.8" cy="895.2" r="14.1" fill="#adafb2"/><path d="M2474.5 897.6 L2480.8 891.3 L2487.1 897.6" fill="none" stroke="#58595d" stroke-width="3.6" stroke-linecap="round" stroke-linejoin="round"/><circle cx="2519.6" cy="895.2" r="14.1" fill="#adafb2"/><path d="M2513.6 889.2 L2525.6 901.2 M2525.6 889.2 L2513.6 901.2" fill="none" stroke="#58595d" stroke-width="3" stroke-linecap="round"/></svg>
<svg style="left:27.2px;top:93.8px" width="30" height="30" viewBox="-15 -15 30 30"><circle r="14.3" fill="#a9dcf6"/><circle cx="0.2" cy="-6.6" r="1.9" fill="#2b5069"/><rect x="-1.5" y="-3.4" width="3.4" height="11.2" rx="1.6" fill="#2b5069"/></svg>
<div style="left:0;top:138.0px;width:176px;height:61.6px;background:#ec4a3f"><span class="t l " style="left:21.6px;top:18px;font-size:23.3px;line-height:26px;letter-spacing:-0.640px;color:#f4e9e4;">High</span></div>
<span class="t l " style="left:389.7px;top:156px;font-size:23.3px;line-height:26px;color:#b7e0f6;text-decoration:underline;text-decoration-thickness:1.4px;text-underline-offset:2.2px;">12</span>
<div style="left:0;top:199.3px;width:176px;height:61.6px;background:#cd6e34"><span class="t l " style="left:21.6px;top:18px;font-size:23.3px;line-height:26px;letter-spacing:-0.514px;color:#f4e9e4;">Medium</span></div>
<span class="t l " style="left:363.8px;top:217px;font-size:23.3px;line-height:26px;color:#b7e0f6;text-decoration:underline;text-decoration-thickness:1.4px;text-underline-offset:2.2px;">1562</span>
<div style="left:0;top:260.6px;width:176px;height:61.6px;background:#c0a838"><span class="t l " style="left:21.6px;top:18px;font-size:23.3px;line-height:26px;letter-spacing:-0.722px;color:#f4e9e4;">Low</span></div>
<span class="t l " style="left:402.6px;top:278px;font-size:23.3px;line-height:26px;color:#f0f0f0;">0</span>
<div style="left:0;top:321.9px;width:176px;height:61.6px;background:#2d5c76"><span class="t l " style="left:21.6px;top:18px;font-size:23.3px;line-height:26px;letter-spacing:-0.358px;color:#d8ecf6;">Informational</span></div>
<span class="t l " style="left:402.6px;top:340px;font-size:23.3px;line-height:26px;color:#f0f0f0;">0</span>
</div>
<div class="panel" style="left:1708px;top:1274px;width:843px;height:200px">
<div class="ph"></div><div class="pl"></div><div class="ps" style="height:200px"></div>
<svg style="left:757.8px;top:23.8px" width="68.8" height="30" viewBox="2465.8 1297.8 68.8 30"><circle cx="2480.8" cy="1312.8" r="14.1" fill="#adafb2"/><path d="M2474.5 1315.2 L2480.8 1308.9 L2487.1 1315.2" fill="none" stroke="#58595d" stroke-width="3.6" stroke-linecap="round" stroke-linejoin="round"/><circle cx="2519.6" cy="1312.8" r="14.1" fill="#adafb2"/><path d="M2513.6 1306.8 L2525.6 1318.8 M2525.6 1306.8 L2513.6 1318.8" fill="none" stroke="#58595d" stroke-width="3" stroke-linecap="round"/></svg>
<span class="t d " style="left:431.5px;top:152px;font-size:21px;line-height:24px;letter-spacing:-0.238px;color:#b9bbbd;">Versions</span>
<span class="t d " style="left:750.6px;top:152px;font-size:21px;line-height:24px;letter-spacing:0.217px;color:#b9bbbd;">Status</span>
<div style="left:726.5px;top:136px;width:2px;height:60px;background:#292b2d"></div><div style="left:841px;top:138px;width:2px;height:60px;background:#292b2d"></div>
</div>
<div id="tip" style="left:1525px;top:1247px;width:610px;height:230px;background:#b6bdc1;border-radius:7px;box-shadow:0 0 10px 1px rgba(0,0,0,0.6)">
<span class="t d " style="left:23.8px;top:26px;font-size:21.6px;line-height:25px;letter-spacing:0.840px;color:#161616;">File Name: /includes/AL5THvvehvvvajyc.exe</span>
<span class="t d " style="left:23.8px;top:56px;font-size:21.6px;line-height:25px;letter-spacing:0.695px;color:#161616;">File Hash: 22be50b9465378f5ab0f2edd55ec360c</span>
<span class="t d " style="left:23.8px;top:86px;font-size:21.6px;line-height:25px;letter-spacing:0.878px;color:#161616;">Attacks: 1</span>
<span class="t d " style="left:23.8px;top:116px;font-size:21.6px;line-height:25px;letter-spacing:0.732px;color:#161616;">Malware Confidence: Very High</span>
<span class="t d " style="left:23.8px;top:146px;font-size:21.6px;line-height:25px;letter-spacing:0.786px;color:#161616;">Result: Unblocked</span>
</div>
</body></html>
